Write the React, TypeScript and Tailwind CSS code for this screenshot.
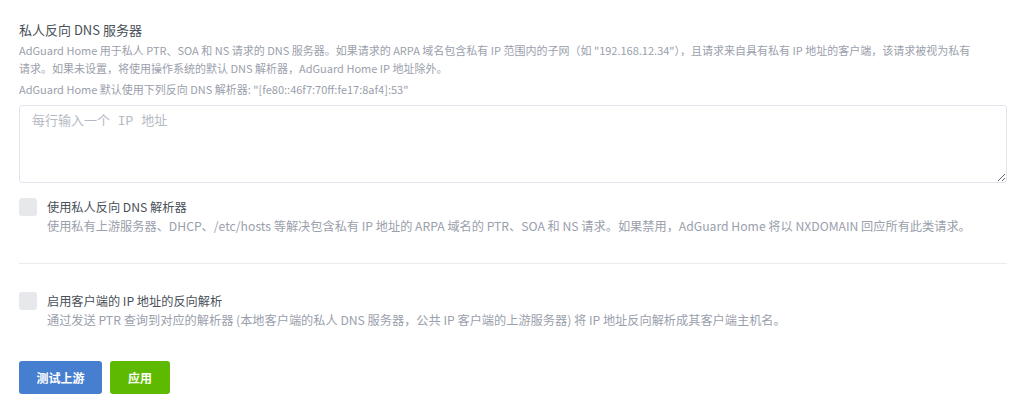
export default function App() {
  return (
    <div className="bg-white w-[1024px] h-[413px] pl-[19px] pr-[17px] pt-[20px] font-['Noto_Sans_CJK_SC',sans-serif] text-[#495057]">
      <div className="text-[13px] leading-[20px] pb-[1px]">私人反向 DNS 服务器</div>
      <div className="w-[958px] text-[11px] leading-[18px] text-[#9aa0ac]">
        AdGuard Home 用于私人 PTR、SOA 和 NS 请求的 DNS 服务器。如果请求的 ARPA 域名包含私有 IP 范围内的子网（如 "192.168.12.34"），且请求来自具有私有 IP 地址的客户端，该请求被视为私有请求。如果未设置，将使用操作系统的默认 DNS 解析器，AdGuard Home IP 地址除外。
      </div>
      <div className="text-[11px] leading-[18px] text-[#9aa0ac] mt-[3px]">
        AdGuard Home 默认使用下列反向 DNS 解析器: "[fe80::46f7:70ff:fe17:8af4]:53"
      </div>
      <textarea
        className="mt-[7px] block w-[988px] h-[78px] border border-[#e0e5ec] rounded-[3px] px-[12px] py-[6px] text-[13px] leading-[20px] font-['Liberation_Mono','Noto_Sans_CJK_SC',monospace] placeholder:text-[#b5bac3] outline-none"
        placeholder="每行输入一个 IP 地址"
      />
      <div className="flex gap-[10px] mt-[15px]">
        <div className="w-[18px] h-[18px] rounded-[3px] bg-[#e6e8eb] shrink-0" />
        <div>
          <div className="text-[12.2px] leading-[18px]">使用私人反向 DNS 解析器</div>
          <div className="text-[12.2px] leading-[18px] text-[#9aa0ac] mt-[1px]">
            使用私有上游服务器、DHCP、/etc/hosts 等解决包含私有 IP 地址的 ARPA 域名的 PTR、SOA 和 NS 请求。如果禁用，AdGuard Home 将以 NXDOMAIN 回应所有此类请求。
          </div>
        </div>
      </div>
      <div className="border-t border-[#e9ecef] w-[988px] mt-[28px]" />
      <div className="flex gap-[10px] mt-[28px]">
        <div className="w-[18px] h-[18px] rounded-[3px] bg-[#e6e8eb] shrink-0" />
        <div>
          <div className="text-[12.2px] leading-[18px]">启用客户端的 IP 地址的反向解析</div>
          <div className="text-[12.2px] leading-[18px] text-[#9aa0ac] mt-[1px]">
            通过发送 PTR 查询到对应的解析器 (本地客户端的私人 DNS 服务器，公共 IP 客户端的上游服务器) 将 IP 地址反向解析成其客户端主机名。
          </div>
        </div>
      </div>
      <div className="flex gap-[8px] mt-[32px]">
        <button className="w-[83px] h-[33px] rounded-[3px] bg-[#467fcf] text-white text-[12px] font-bold">测试上游</button>
        <button className="w-[60px] h-[33px] rounded-[3px] bg-[#5eba00] text-white text-[12px] font-bold">应用</button>
      </div>
    </div>
  );
}
